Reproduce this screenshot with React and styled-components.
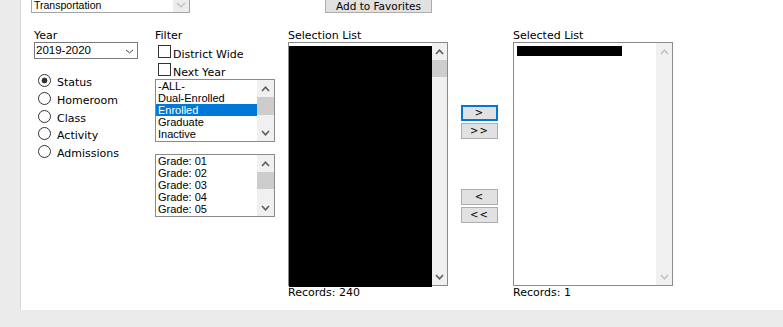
import React from 'react';
import styled, { createGlobalStyle } from 'styled-components';

const Global = createGlobalStyle`
  html, body { margin: 0; padding: 0; background: #ebebeb; overflow: hidden; }
  body { font-family: "DejaVu Sans", Verdana, sans-serif; font-size: 11px; color: #000; }
`;

const Panel = styled.div`
  display: flow-root;
  margin-left: 20px;
  border-left: 1px solid #d8d8d8;
  background: #fff;
  padding-bottom: 11px;
`;

const TopBar = styled.div`
  display: flex;
  align-items: flex-end;
  height: 20px;
  margin-top: -7px;
  padding-left: 10px;
`;

const TopSelect = styled.div`
  display: flex;
  align-items: stretch;
  box-sizing: border-box;
  width: 159px;
  height: 17px;
  border: 1px solid #a5a5a5;
  background: #fff;
  font: 10.5px/1 "Liberation Sans", Arial, sans-serif;
`;

const TopSelectText = styled.span`
  flex: 1;
  display: flex;
  align-items: center;
  padding: 2px 0 0 2px;
`;

const TopSelectArrow = styled.span`
  width: 16px;
  background: #ececec;
  display: flex;
  align-items: center;
  justify-content: center;
`;

const FavButton = styled.button`
  box-sizing: border-box;
  width: 107px;
  height: 15px;
  margin: 0 0 0 135px;
  padding: 1px 0 0;
  background: #e1e1e1;
  border: 1px solid #adadad;
  font: 10.5px/1 "DejaVu Sans", Verdana, sans-serif;
  color: #000;
`;

const Main = styled.div`
  display: grid;
  grid-template-columns: 121px 133px 173px 52px 1fr;
  margin-top: 17px;
  padding-left: 13px;
`;

const Column = styled.div`
  display: flex;
  flex-direction: column;
  align-items: flex-start;
`;

const Label = styled.div`
  font: 11px/12px "DejaVu Sans", Verdana, sans-serif;
  height: 12px;
  white-space: nowrap;
`;

const YearSelect = styled.div`
  display: flex;
  align-items: center;
  box-sizing: border-box;
  width: 104px;
  height: 17px;
  border: 1px solid #7a7a7a;
  padding: 1px 3px 0 1px;
  font: 11.5px/1 "Liberation Sans", Arial, sans-serif;
`;

const SelectValue = styled.span`
  flex: 1;
`;

const RadioList = styled.div`
  display: flex;
  flex-direction: column;
  gap: 4.8px;
  margin-top: 15px;
`;

const OptionRow = styled.label`
  display: flex;
  align-items: flex-end;
  height: 13px;
  white-space: nowrap;
  margin-top: ${p => p.$mt || 0}px;
`;

const Radio = styled.input.attrs({ type: 'radio' })`
  appearance: none;
  box-sizing: border-box;
  width: 13px;
  height: 13px;
  margin: 0 6px 0 4px;
  border: 1px solid #333;
  border-radius: 50%;
  background: ${p => (p.checked ? 'radial-gradient(circle, #333 0 2.6px, #fff 3.2px)' : '#fff')};
  flex: none;
`;

const Check = styled.input.attrs({ type: 'checkbox' })`
  appearance: none;
  box-sizing: border-box;
  width: 13px;
  height: 13px;
  margin: 0 2px 0 3px;
  border: 1px solid #333;
  background: #fff;
  flex: none;
`;

const OptionText = styled.span`
  font: 11px/13px "DejaVu Sans", Verdana, sans-serif;
  margin-bottom: ${p => p.$drop}px;
`;

const ListFrame = styled.div`
  display: flex;
  box-sizing: border-box;
  width: ${p => p.$w}px;
  height: ${p => p.$h}px;
  margin-top: ${p => p.$mt || 0}px;
  border: 1px solid #8a8a8a;
  background: #fff;
`;

const Items = styled.div`
  flex: 1;
  min-width: 0;
`;

const Item = styled.div`
  height: 12px;
  padding-left: 2px;
  font: 11px/12px "Liberation Sans", Arial, sans-serif;
  white-space: nowrap;
  background: ${p => (p.$selected ? '#0078d7' : 'transparent')};
  color: ${p => (p.$selected ? '#fff' : '#000')};
`;

const Redaction = styled.div`
  background: #000;
  width: ${p => p.$w}px;
  height: ${p => p.$h}px;
  margin: 3px 0 0 ${p => p.$ml || 0}px;
`;

const ScrollBar = styled.div`
  display: flex;
  flex-direction: column;
  width: ${p => p.$w}px;
  flex: none;
  background: #f0f0f0;
`;

const ScrollArrow = styled.div`
  height: 17px;
  flex: none;
  display: flex;
  align-items: center;
  justify-content: center;
`;

const Track = styled.div`
  flex: 1;
`;

const Thumb = styled.div`
  height: ${p => p.$h}px;
  margin-top: ${p => p.$top}px;
  background: #cdcdcd;
`;

const Records = styled.div`
  font: 11px/12px "DejaVu Sans", Verdana, sans-serif;
  white-space: nowrap;
  margin-top: 1px;
`;

const ButtonCol = styled.div`
  display: flex;
  flex-direction: column;
  gap: 2px;
  padding-top: 75px;
`;

const MoveButton = styled.button`
  box-sizing: border-box;
  width: 37px;
  height: 16px;
  margin: ${p => p.$mt || 0}px 0 0;
  padding: 0;
  background: #e1e1e1;
  border: ${p => (p.$focus ? '2px solid #0078d7' : '1px solid #adadad')};
  font: 10px/1 "DejaVu Sans", Verdana, sans-serif;
  letter-spacing: 1px;
  color: #000;
`;

const Chevron = ({ dir = 'up', color = '#606060', w = 9, h = 6, sw = 1.7 }) => (
  <svg width={w} height={h} viewBox={`0 0 ${w} ${h}`}>
    <polyline
      points={dir === 'up' ? `1,${h - 1} ${w / 2},1.2 ${w - 1},${h - 1}` : `1,1 ${w / 2},${h - 1.2} ${w - 1},1`}
      fill="none"
      stroke={color}
      strokeWidth={sw}
    />
  </svg>
);

const Scroller = ({ w = 17, thumbTop = 0, thumbH, disabled }) => {
  const c = disabled ? '#c4c4c4' : '#606060';
  return (
    <ScrollBar $w={w}>
      <ScrollArrow><Chevron dir="up" color={c} /></ScrollArrow>
      <Track>{thumbH ? <Thumb $h={thumbH} $top={thumbTop} /> : null}</Track>
      <ScrollArrow><Chevron dir="down" color={c} /></ScrollArrow>
    </ScrollBar>
  );
};

const statuses = ['-ALL-', 'Dual-Enrolled', 'Enrolled', 'Graduate', 'Inactive'];
const grades = ['Grade: 01', 'Grade: 02', 'Grade: 03', 'Grade: 04', 'Grade: 05'];
const radios = ['Status', 'Homeroom', 'Class', 'Activity', 'Admissions'];

export default function App() {
  return (
    <>
      <Global />
      <Panel>
        <TopBar>
          <TopSelect>
            <TopSelectText>Transportation</TopSelectText>
            <TopSelectArrow><Chevron dir="down" color="#c2c2c2" w={10} h={6} sw={1.5} /></TopSelectArrow>
          </TopSelect>
          <FavButton>Add to Favorites</FavButton>
        </TopBar>
        <Main>
          <Column>
            <Label>Year</Label>
            <YearSelect>
              <SelectValue>2019-2020</SelectValue>
              <Chevron dir="down" color="#444" w={9} h={5} sw={1} />
            </YearSelect>
            <RadioList>
              {radios.map((r, i) => (
                <OptionRow key={r}>
                  <Radio name="by" checked={i === 0} readOnly />
                  <OptionText $drop={-2}>{r}</OptionText>
                </OptionRow>
              ))}
            </RadioList>
          </Column>
          <Column>
            <Label>Filter</Label>
            <OptionRow $mt={3}>
              <Check readOnly />
              <OptionText $drop={-2.5}>District Wide</OptionText>
            </OptionRow>
            <OptionRow $mt={5}>
              <Check readOnly />
              <OptionText $drop={-2.5}>Next Year</OptionText>
            </OptionRow>
            <ListFrame $w={120} $h={63} $mt={3}>
              <Items>
                {statuses.map(s => (
                  <Item key={s} $selected={s === 'Enrolled'}>{s}</Item>
                ))}
              </Items>
              <Scroller w={17} thumbTop={0} thumbH={18} />
            </ListFrame>
            <ListFrame $w={120} $h={63} $mt={12}>
              <Items>
                {grades.map(g => (
                  <Item key={g}>{g}</Item>
                ))}
              </Items>
              <Scroller w={17} thumbTop={0} thumbH={17} />
            </ListFrame>
          </Column>
          <Column>
            <Label>Selection List</Label>
            <ListFrame $w={160} $h={244}>
              <Items>
                <Redaction $w={143} $h={241} />
              </Items>
              <Scroller w={15} thumbTop={0} thumbH={17} />
            </ListFrame>
            <Records>Records: 240</Records>
          </Column>
          <ButtonCol>
            <MoveButton $focus>&gt;</MoveButton>
            <MoveButton>&gt;&gt;</MoveButton>
            <MoveButton $mt={48}>&lt;</MoveButton>
            <MoveButton>&lt;&lt;</MoveButton>
          </ButtonCol>
          <Column>
            <Label>Selected List</Label>
            <ListFrame $w={160} $h={244}>
              <Items>
                <Redaction $w={105} $h={10} $ml={3} />
              </Items>
              <Scroller w={16} disabled />
            </ListFrame>
            <Records>Records: 1</Records>
          </Column>
        </Main>
      </Panel>
    </>
  );
}
